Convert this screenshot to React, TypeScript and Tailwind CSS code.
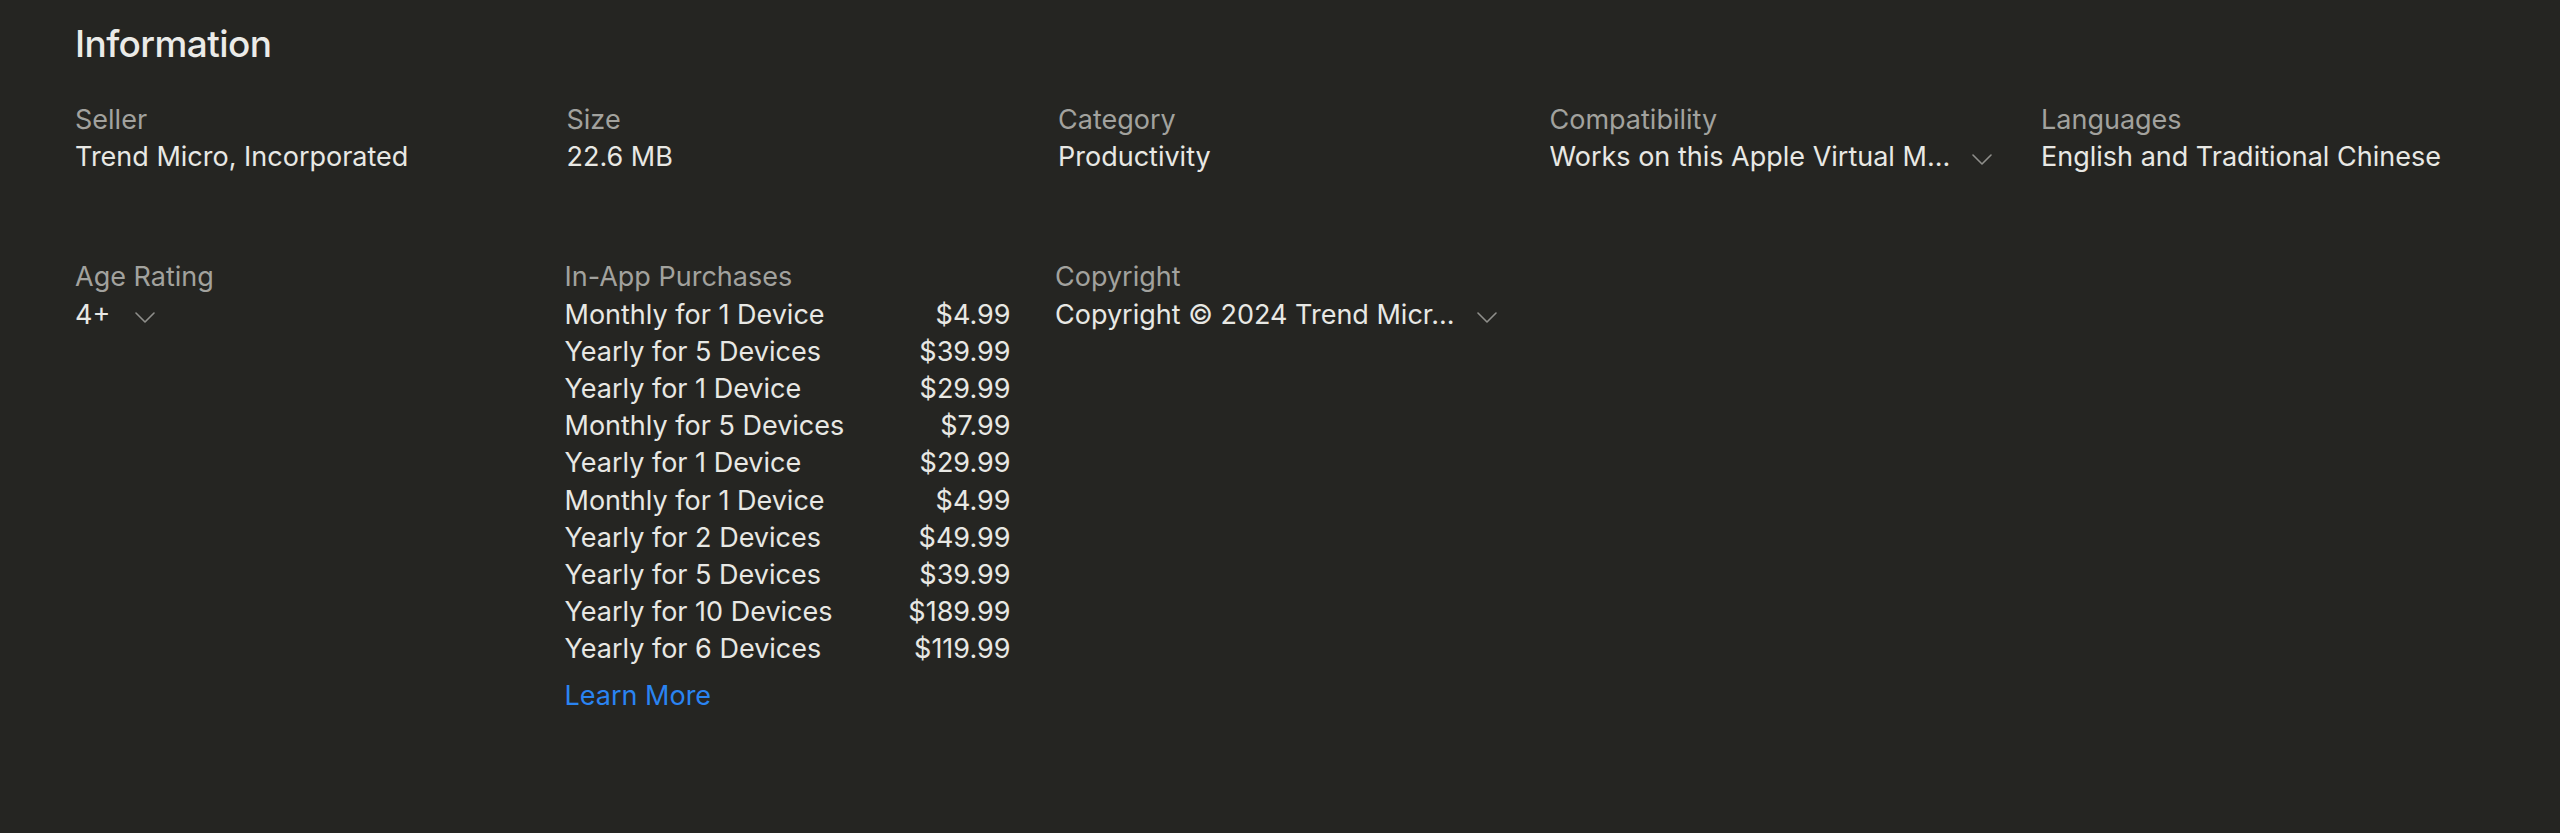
import type { ReactNode } from 'react'

const purchases = [
  { name: 'Monthly for 1 Device', price: '$4.99' },
  { name: 'Yearly for 5 Devices', price: '$39.99' },
  { name: 'Yearly for 1 Device', price: '$29.99' },
  { name: 'Monthly for 5 Devices', price: '$7.99' },
  { name: 'Yearly for 1 Device', price: '$29.99' },
  { name: 'Monthly for 1 Device', price: '$4.99' },
  { name: 'Yearly for 2 Devices', price: '$49.99' },
  { name: 'Yearly for 5 Devices', price: '$39.99' },
  { name: 'Yearly for 10 Devices', price: '$189.99' },
  { name: 'Yearly for 6 Devices', price: '$119.99' },
]

function Chevron() {
  return (
    <svg width="20" height="11" viewBox="0 0 20 11" fill="none" className="mt-[6px] shrink-0">
      <polyline points="1,1 10,10 19,1" stroke="#8f8f8b" strokeWidth="1.6" strokeLinecap="round" strokeLinejoin="round" />
    </svg>
  )
}

function Item({ label, children }: { label: string; children: ReactNode }) {
  return (
    <div className="min-w-0">
      <dt className="text-[#a2a29e]">{label}</dt>
      <dd className="text-[#e8e8e4]">{children}</dd>
    </div>
  )
}

function Expandable({ text }: { text: string }) {
  return (
    <div className="flex items-center gap-[22px]">
      <span className="truncate">{text}</span>
      <Chevron />
    </div>
  )
}

export default function App() {
  return (
    <div className="min-h-screen w-full bg-[#252522] px-[75px] pt-[21px] font-['Inter','Liberation_Sans',sans-serif] text-[27px] leading-[37.2px]">
      <h2 className="text-[37px] font-medium leading-[46px] tracking-[-0.6px] text-[#ebebe8]">Information</h2>

      <dl className="mt-[34px] grid w-[2410px] grid-cols-5 gap-x-[47.5px] gap-y-[83px]">
        <Item label="Seller">Trend Micro, Incorporated</Item>
        <Item label="Size">22.6 MB</Item>
        <Item label="Category">Productivity</Item>
        <Item label="Compatibility">
          <Expandable text="Works on this Apple Virtual M..." />
        </Item>
        <Item label="Languages">English and Traditional Chinese</Item>

        <Item label="Age Rating">
          <div className="flex items-center gap-[25px]">
            <span>4+</span>
            <Chevron />
          </div>
        </Item>
        <div className="-ml-[2px] min-w-0">
          <Item label="In-App Purchases">
            <ul>
              {purchases.map((p, i) => (
                <li key={i} className="flex justify-between">
                  <span>{p.name}</span>
                  <span>{p.price}</span>
                </li>
              ))}
            </ul>
            <a href="#" className="mt-[9px] block text-[#2a84f2]">
              Learn More
            </a>
          </Item>
        </div>
        <div className="-ml-[3px] min-w-0">
          <Item label="Copyright">
            <Expandable text="Copyright © 2024 Trend Micr..." />
          </Item>
        </div>
      </dl>
    </div>
  )
}
